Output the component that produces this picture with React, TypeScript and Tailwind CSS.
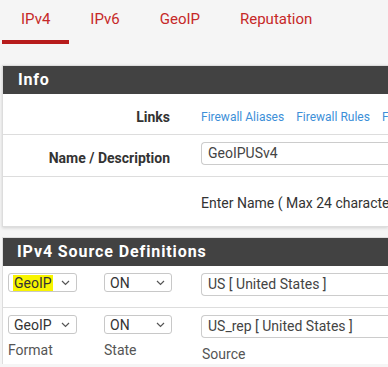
import React from 'react';

const Chevron = () => (
  <svg width="9" height="6" viewBox="0 0 9 6" className="shrink-0">
    <polyline points="1,1 4.5,4.5 8,1" fill="none" stroke="#555" strokeWidth="1.2" />
  </svg>
);

const Select: React.FC<{ value: string; width: string; highlight?: boolean }> = ({ value, width, highlight }) => (
  <div className={`${width} h-[19px] flex items-center justify-between pl-[5px] pr-[6px] border border-[#c8c8c8] rounded-[3px] bg-white text-[14px] text-[#333]`}>
    <span className={highlight ? 'bg-[#f8f400] px-[1px] -ml-[1px] leading-[16px]' : 'leading-[16px]'}>{value}</span>
    <Chevron />
  </div>
);

const Input: React.FC<{ value: string }> = ({ value }) => (
  <div className="flex-1 h-[23px] flex items-center pl-[6px] border border-[#cccccc] border-r-0 rounded-l-[4px] bg-white text-[14px] text-[#444] whitespace-nowrap">
    {value}
  </div>
);

export default function App() {
  const tabs = ['IPv4', 'IPv6', 'GeoIP', 'Reputation'];
  return (
    <div className="w-[388px] h-[367px] overflow-hidden bg-[#f5f5f5] font-['Roboto',sans-serif]">
      <div className="flex gap-[2px] pl-[2px]">
        {tabs.map((t, i) => (
          <div
            key={t}
            className={`px-[19px] pt-[9px] h-[44px] text-[15px] leading-[20px] text-[#c62828] ${i === 0 ? 'border-b-4 border-[#b71c1c]' : ''}`}
          >
            {t}
          </div>
        ))}
      </div>

      <div className="mt-[21px] ml-[2px] bg-white border border-[#dddddd] border-r-0 shadow-[0_1px_3px_rgba(0,0,0,0.15)]">
        <div className="h-[28px] bg-[#424242] pl-[15px] flex items-center text-white text-[16px] font-bold tracking-[0.8px]">
          Info
        </div>
        <div className="flex h-[41px] items-center border-b border-[#dddddd]">
          <div className="w-[198px] shrink-0 pr-[31px] text-right text-[14px] font-bold text-[#333] mt-[6px]">Links</div>
          <div className="flex gap-[12px] text-[12px] text-[#3d8fd8] whitespace-nowrap mt-[6px]">
            <span>Firewall Aliases</span>
            <span>Firewall Rules</span>
            <span>Firewall Log</span>
          </div>
        </div>
        <div className="flex h-[42px] border-b border-[#dddddd]">
          <div className="w-[198px] shrink-0 pr-[31px] pt-[13px] text-right text-[14px] leading-[20px] font-bold text-[#333] whitespace-nowrap">
            Name / Description
          </div>
          <div className="flex-1 pt-[7px] flex items-start">
            <Input value="GeoIPUSv4" />
          </div>
        </div>
        <div className="flex h-[49px]">
          <div className="w-[198px] shrink-0" />
          <div className="pt-[16px] text-[14px] leading-[20px] text-[#333] whitespace-nowrap">
            Enter Name ( Max 24 characters )
          </div>
        </div>
      </div>

      <div className="mt-[10px] ml-[2px] bg-white border border-[#dddddd] border-r-0 border-b-0">
        <div className="h-[28px] bg-[#424242] pl-[14px] flex items-center text-white text-[16px] font-bold tracking-[0.9px] whitespace-nowrap">
          IPv4 Source Definitions
        </div>
        <div className="flex h-[42px] pt-[7px] pl-[5px] border-b border-[#dddddd]">
          <Select value="GeoIP" width="w-[69px]" highlight />
          <div className="ml-[27px]">
            <Select value="ON" width="w-[68px]" />
          </div>
          <div className="ml-[29px] flex-1 flex items-start">
            <Input value="US [ United States ]" />
          </div>
        </div>
        <div className="flex pt-[7px] pl-[5px]">
          <div className="w-[96px] shrink-0">
            <Select value="GeoIP" width="w-[69px]" />
            <div className="mt-[6px] text-[14px] leading-[20px] text-[#555]">Format</div>
          </div>
          <div className="w-[97px] shrink-0">
            <Select value="ON" width="w-[68px]" />
            <div className="mt-[6px] text-[14px] leading-[20px] text-[#555]">State</div>
          </div>
          <div className="flex-1">
            <div className="flex">
              <Input value="US_rep [ United States ]" />
            </div>
            <div className="mt-[6px] pl-[1px] text-[14px] leading-[20px] text-[#555]">Source</div>
          </div>
        </div>
      </div>
    </div>
  );
}
